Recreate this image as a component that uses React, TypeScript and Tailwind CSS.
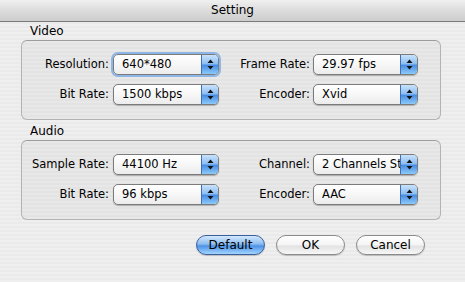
import React from 'react';

const font = { fontFamily: '"DejaVu Sans", "Lucida Grande", sans-serif' };

const Stepper = () => (
  <div className="absolute right-0 top-0 bottom-0 w-[17px] rounded-r-[4px] border-l border-[#3f6fb5] bg-[linear-gradient(180deg,#c9e2fb_0%,#8fbff2_45%,#4a8ee3_55%,#8ccaf9_100%)] flex items-center justify-center">
    <svg width="7" height="11" viewBox="0 0 7 11">
      <path d="M3.5 0.5 L6.5 4 L0.5 4 Z" fill="#111" />
      <path d="M3.5 10.5 L6.5 7 L0.5 7 Z" fill="#111" />
    </svg>
  </div>
);

const Popup = ({ value, width, focus }: { value: string; width: string; focus?: boolean }) => (
  <div
    className={`relative h-[21px] ${width} rounded-[5px] border border-[#7b7b7b] bg-[linear-gradient(180deg,#ffffff_0%,#f7f7f7_50%,#ececec_100%)] ${
      focus ? 'shadow-[0_0_0_2px_#8db5e6]' : 'shadow-[0_1px_1px_rgba(0,0,0,0.25)]'
    }`}
  >
    <div className="pl-[8px] pr-[20px] text-[11.5px] leading-[19px] text-black whitespace-nowrap overflow-hidden">
      {value}
    </div>
    <Stepper />
  </div>
);

const Row = ({
  l1, v1, l2, v2, focus,
}: { l1: string; v1: string; l2: string; v2: string; focus?: boolean }) => (
  <div className="flex items-center h-[21px]">
    <div className="w-[87px] text-right text-[11.5px] text-black whitespace-nowrap">{l1}</div>
    <div className="ml-[4px]">
      <Popup value={v1} width="w-[106px]" focus={focus} />
    </div>
    <div className="w-[91px] text-right text-[11.5px] text-black whitespace-nowrap">{l2}</div>
    <div className="ml-[3px]">
      <Popup value={v2} width="w-[105px]" />
    </div>
  </div>
);

const Group = ({ title, children }: { title: string; children: React.ReactNode }) => (
  <div>
    <div className="pl-[9px] h-[18px] text-[12px] leading-[18px] text-black">{title}</div>
    <div className="w-[420px] rounded-[6px] border border-[#b3b3b3] border-t-[#9d9d9d] bg-[repeating-linear-gradient(180deg,#e8e8e8_0px,#e8e8e8_2px,#e3e3e3_2px,#e3e3e3_4px)] pt-[13px] pb-[14px] flex flex-col gap-[9px]">
      {children}
    </div>
  </div>
);

const Button = ({ label, primary }: { label: string; primary?: boolean }) => (
  <div
    className={`w-[69px] h-[20px] rounded-full border text-center text-[12px] leading-[18px] text-black ${
      primary
        ? 'border-[#3a5f9c] bg-[linear-gradient(180deg,#d4e8fc_0%,#8cbcf0_45%,#4d92e6_55%,#a2d5ff_100%)]'
        : 'border-[#8a8a8a] bg-[linear-gradient(180deg,#ffffff_0%,#f4f4f4_50%,#e2e2e2_55%,#f7f7f7_100%)]'
    } shadow-[0_1px_1px_rgba(0,0,0,0.2)]`}
  >
    {label}
  </div>
);

export default function App() {
  return (
    <div
      style={font}
      className="w-[465px] h-[282px] overflow-hidden bg-[repeating-linear-gradient(180deg,#efefef_0px,#efefef_2px,#eaeaea_2px,#eaeaea_4px)]"
    >
      <div className="h-[22px] border-b border-[#7a7a7a] bg-[linear-gradient(180deg,#f0f0f0_0%,#dcdcdc_50%,#cdcdcd_100%)] text-center text-[12px] leading-[21px] text-black">
        Setting
      </div>
      <div className="pl-[21px] flex flex-col gap-[2px]">
        <Group title="Video">
          <Row l1="Resolution:" v1="640*480" l2="Frame Rate:" v2="29.97 fps" focus />
          <Row l1="Bit Rate:" v1="1500 kbps" l2="Encoder:" v2="Xvid" />
        </Group>
        <Group title="Audio">
          <Row l1="Sample Rate:" v1="44100 Hz" l2="Channel:" v2="2 Channels Stereo" />
          <Row l1="Bit Rate:" v1="96 kbps" l2="Encoder:" v2="AAC" />
        </Group>
      </div>
      <div className="flex justify-end gap-[11px] pr-[40px] mt-[15px]">
        <Button label="Default" primary />
        <Button label="OK" />
        <Button label="Cancel" />
      </div>
    </div>
  );
}
